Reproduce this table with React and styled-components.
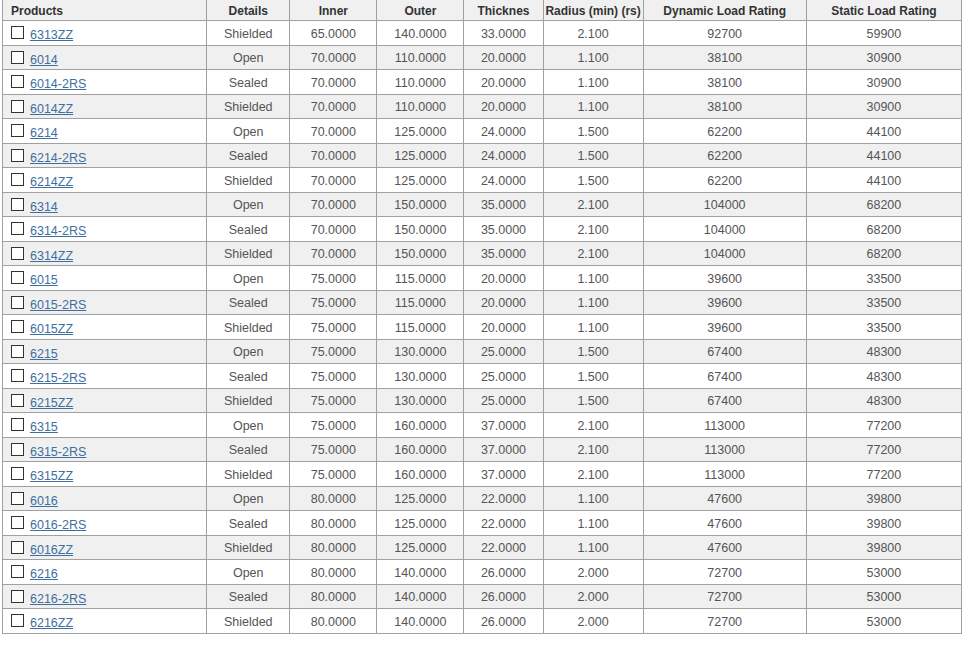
import React from 'react';
import styled, {createGlobalStyle} from 'styled-components';

const GlobalStyle = createGlobalStyle`
  html, body {
    margin: 0;
    padding: 0;
    background: #ffffff;
  }
  body {
    font-family: "Liberation Sans", Arial, sans-serif;
  }
`;

const rows = [
  ['6313ZZ', 'Shielded', '65.0000', '140.0000', '33.0000', '2.100', '92700', '59900'],
  ['6014', 'Open', '70.0000', '110.0000', '20.0000', '1.100', '38100', '30900'],
  ['6014-2RS', 'Sealed', '70.0000', '110.0000', '20.0000', '1.100', '38100', '30900'],
  ['6014ZZ', 'Shielded', '70.0000', '110.0000', '20.0000', '1.100', '38100', '30900'],
  ['6214', 'Open', '70.0000', '125.0000', '24.0000', '1.500', '62200', '44100'],
  ['6214-2RS', 'Sealed', '70.0000', '125.0000', '24.0000', '1.500', '62200', '44100'],
  ['6214ZZ', 'Shielded', '70.0000', '125.0000', '24.0000', '1.500', '62200', '44100'],
  ['6314', 'Open', '70.0000', '150.0000', '35.0000', '2.100', '104000', '68200'],
  ['6314-2RS', 'Sealed', '70.0000', '150.0000', '35.0000', '2.100', '104000', '68200'],
  ['6314ZZ', 'Shielded', '70.0000', '150.0000', '35.0000', '2.100', '104000', '68200'],
  ['6015', 'Open', '75.0000', '115.0000', '20.0000', '1.100', '39600', '33500'],
  ['6015-2RS', 'Sealed', '75.0000', '115.0000', '20.0000', '1.100', '39600', '33500'],
  ['6015ZZ', 'Shielded', '75.0000', '115.0000', '20.0000', '1.100', '39600', '33500'],
  ['6215', 'Open', '75.0000', '130.0000', '25.0000', '1.500', '67400', '48300'],
  ['6215-2RS', 'Sealed', '75.0000', '130.0000', '25.0000', '1.500', '67400', '48300'],
  ['6215ZZ', 'Shielded', '75.0000', '130.0000', '25.0000', '1.500', '67400', '48300'],
  ['6315', 'Open', '75.0000', '160.0000', '37.0000', '2.100', '113000', '77200'],
  ['6315-2RS', 'Sealed', '75.0000', '160.0000', '37.0000', '2.100', '113000', '77200'],
  ['6315ZZ', 'Shielded', '75.0000', '160.0000', '37.0000', '2.100', '113000', '77200'],
  ['6016', 'Open', '80.0000', '125.0000', '22.0000', '1.100', '47600', '39800'],
  ['6016-2RS', 'Sealed', '80.0000', '125.0000', '22.0000', '1.100', '47600', '39800'],
  ['6016ZZ', 'Shielded', '80.0000', '125.0000', '22.0000', '1.100', '47600', '39800'],
  ['6216', 'Open', '80.0000', '140.0000', '26.0000', '2.000', '72700', '53000'],
  ['6216-2RS', 'Sealed', '80.0000', '140.0000', '26.0000', '2.000', '72700', '53000'],
  ['6216ZZ', 'Shielded', '80.0000', '140.0000', '26.0000', '2.000', '72700', '53000'],
];

const columns = [
  {title: 'Products', width: 204},
  {title: 'Details', width: 83},
  {title: 'Inner', width: 87},
  {title: 'Outer', width: 87},
  {title: 'Thicknes', width: 79},
  {title: 'Radius (min) (rs)', width: 100},
  {title: 'Dynamic Load Rating', width: 163},
  {title: 'Static Load Rating', width: 155},
];

const App = () => {
  return (
    <>
      <GlobalStyle/>
      <Wrapper>
        <Table>
          <colgroup>
            {columns.map(c => <col key={c.title} style={{width: c.width}}/>)}
          </colgroup>
          <thead>
            <tr>
              {columns.map((c, i) => (
                <HeadCell key={c.title} $left={i === 0}>{c.title}</HeadCell>
              ))}
            </tr>
          </thead>
          <tbody>
            {rows.map((r, i) => (
              <Row key={r[0]} $alt={i % 2 === 1}>
                <ProductCell>
                  <Box type="checkbox"/>
                  <ProductLink href="#">{r[0]}</ProductLink>
                </ProductCell>
                {r.slice(1).map((v, j) => <Cell key={j}>{v}</Cell>)}
              </Row>
            ))}
          </tbody>
        </Table>
      </Wrapper>
    </>
  );
};

export default App;


const Wrapper = styled.div`
  padding-left: 2px;
`;

const Table = styled.table`
  border-collapse: collapse;
  table-layout: fixed;
  width: 960px;
  font-size: 12.5px;
  color: #555555;
  border: 1px solid #a0a0a0;
  border-top: none;
`;

const HeadCell = styled.th`
  height: 16px;
  padding: 4px 0 0 ${p => p.$left ? '8px' : '0'};
  background: #f0f0f0;
  color: #333333;
  font-size: 12px;
  font-weight: bold;
  text-align: ${p => p.$left ? 'left' : 'center'};
  vertical-align: top;
  line-height: 14px;
  border: 1px solid #a0a0a0;
  border-top: none;
  white-space: nowrap;
`;

const Row = styled.tr`
  height: 24.5px;
  background: ${p => p.$alt ? '#f0f0f0' : '#ffffff'};
`;

const Cell = styled.td`
  padding: 3px 0 0;
  text-align: center;
  vertical-align: middle;
  border: 1px solid #a0a0a0;
  line-height: 15px;
  white-space: nowrap;
`;

const ProductCell = styled(Cell)`
  text-align: left;
  padding-left: 8px;
`;

const Box = styled.input`
  appearance: none;
  width: 13px;
  height: 13px;
  margin: 0 6px 0 0;
  border: 1px solid #333333;
  background: #ffffff;
  vertical-align: -1px;
`;

const ProductLink = styled.a`
  color: #3f6f9f;
  text-decoration: underline;
  position: relative;
  top: 1px;
`;
